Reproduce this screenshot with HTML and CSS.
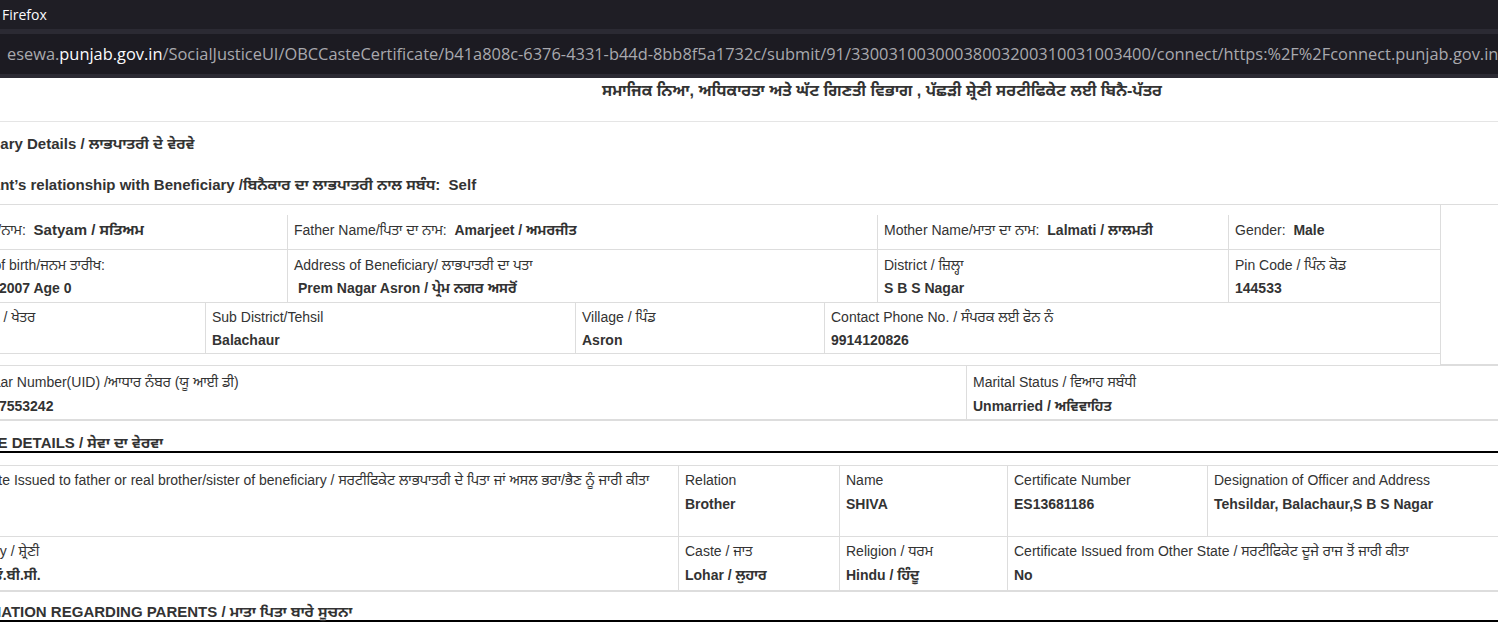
FILE: index.html
```html
<!DOCTYPE html>
<html lang="pa">
<head>
<meta charset="utf-8">
<title>OBC Caste Certificate - eSewa Punjab</title>
<link rel="stylesheet" href="styles.css">
</head>
<body>
<div class="browser">
  <div class="titlebar">Firefox</div>
  <div class="toolbar">
    <div class="urlbar"><span class="url-dim">esewa.</span><span class="url-host">punjab.gov.in</span><span class="url-dim">/SocialJusticeUI/OBCCasteCertificate/b41a808c-6376-4331-b44d-8bb8f5a1732c/submit/91/33003100300038003200310031003400/connect/https:%2F%2Fconnect.punjab.gov.in</span></div>
  </div>
</div>
<div class="viewport">
  <div class="page">
    <h1 class="form-title">ਸਮਾਜਿਕ ਨਿਆ, ਅਧਿਕਾਰਤਾ ਅਤੇ ਘੱਟ ਗਿਣਤੀ ਵਿਭਾਗ , ਪੱਛੜੀ ਸ਼੍ਰੇਣੀ ਸਰਟੀਫਿਕੇਟ ਲਈ ਬਿਨੈ-ਪੱਤਰ</h1>

    <h2 class="section-title">Beneficiary Details / ਲਾਭਪਾਤਰੀ ਦੇ ਵੇਰਵੇ</h2>
    <p class="relation-line">Applicant’s relationship with Beneficiary /ਬਿਨੈਕਾਰ ਦਾ ਲਾਭਪਾਤਰੀ ਨਾਲ ਸਬੰਧ:&nbsp; Self</p>

    <div class="benef">
      <div class="benef-top">
        <div class="benef-main">
          <div class="row row-1 cols-a">
            <div class="cell">Name/ਨਾਮ:&nbsp; <b class="big">Satyam / ਸਤਿਅਮ</b></div>
            <div class="cell">Father Name/ਪਿਤਾ ਦਾ ਨਾਮ:&nbsp; <b>Amarjeet / ਅਮਰਜੀਤ</b></div>
            <div class="cell">Mother Name/ਮਾਤਾ ਦਾ ਨਾਮ:&nbsp; <b>Lalmati / ਲਾਲਮਤੀ</b></div>
            <div class="cell">Gender:&nbsp; <b>Male</b></div>
          </div>
          <div class="row row-2 cols-a">
            <div class="cell"><div class="lbl">Date of birth/ਜਨਮ ਤਾਰੀਖ:</div><div class="val">15/08/2007 Age 0</div></div>
            <div class="cell"><div class="lbl">Address of Beneficiary/ ਲਾਭਪਾਤਰੀ ਦਾ ਪਤਾ</div><div class="val">&nbsp;Prem Nagar Asron / ਪ੍ਰੇਮ ਨਗਰ ਅਸਰੋਂ</div></div>
            <div class="cell"><div class="lbl">District / ਜ਼ਿਲ੍ਹਾ</div><div class="val">S B S Nagar</div></div>
            <div class="cell"><div class="lbl">Pin Code / ਪਿੰਨ ਕੋਡ</div><div class="val">144533</div></div>
          </div>
          <div class="row row-3 cols-b">
            <div class="cell cell-area"><div class="lbl">Area / ਖੇਤਰ</div><div class="val">Rural</div></div>
            <div class="cell"><div class="lbl">Sub District/Tehsil</div><div class="val">Balachaur</div></div>
            <div class="cell"><div class="lbl">Village / ਪਿੰਡ</div><div class="val">Asron</div></div>
            <div class="cell"><div class="lbl">Contact Phone No. / ਸੰਪਰਕ ਲਈ ਫੋਨ ਨੰ</div><div class="val">9914120826</div></div>
          </div>
        </div>
        <div class="photo"></div>
      </div>
      <div class="row row-4 cols-c">
        <div class="cell"><div class="lbl">Aadhaar Number(UID) /ਆਧਾਰ ਨੰਬਰ (ਯੂ ਆਈ ਡੀ)</div><div class="val">xxxxx7553242</div></div>
        <div class="cell"><div class="lbl">Marital Status / ਵਿਆਹ ਸਬੰਧੀ</div><div class="val">Unmarried / ਅਵਿਵਾਹਿਤ</div></div>
      </div>
    </div>

    <h2 class="section-title ruled service-title">SERVICE DETAILS / ਸੇਵਾ ਦਾ ਵੇਰਵਾ</h2>

    <div class="service">
      <div class="row row-5 cols-d">
        <div class="cell cell-issued"><div class="lbl">Certificate Issued to father or real brother/sister of beneficiary / ਸਰਟੀਫਿਕੇਟ ਲਾਭਪਾਤਰੀ ਦੇ ਪਿਤਾ ਜਾਂ ਅਸਲ ਭਰਾ/ਭੈਣ ਨੂੰ ਜਾਰੀ ਕੀਤਾ</div><div class="val">Yes</div></div>
        <div class="cell"><div class="lbl">Relation</div><div class="val">Brother</div></div>
        <div class="cell"><div class="lbl">Name</div><div class="val">SHIVA</div></div>
        <div class="cell"><div class="lbl">Certificate Number</div><div class="val">ES13681186</div></div>
        <div class="cell"><div class="lbl">Designation of Officer and Address</div><div class="val">Tehsildar, Balachaur,S B S Nagar</div></div>
      </div>
      <div class="row row-6 cols-e">
        <div class="cell"><div class="lbl">Category / ਸ਼੍ਰੇਣੀ</div><div class="val">OBC / ਓ.ਬੀ.ਸੀ.</div></div>
        <div class="cell"><div class="lbl">Caste / ਜਾਤ</div><div class="val">Lohar / ਲੁਹਾਰ</div></div>
        <div class="cell"><div class="lbl">Religion / ਧਰਮ</div><div class="val">Hindu / ਹਿੰਦੂ</div></div>
        <div class="cell"><div class="lbl">Certificate Issued from Other State / ਸਰਟੀਫਿਕੇਟ ਦੂਜੇ ਰਾਜ ਤੋਂ ਜਾਰੀ ਕੀਤਾ</div><div class="val">No</div></div>
      </div>
    </div>

    <h2 class="section-title ruled parents-title">INFORMATION REGARDING PARENTS / ਮਾਤਾ ਪਿਤਾ ਬਾਰੇ ਸੂਚਨਾ</h2>
  </div>
</div>
</body>
</html>
```

FILE: styles.css
```css
* { box-sizing: border-box; }

html, body {
  margin: 0;
  padding: 0;
}

body {
  width: 1498px;
  height: 640px;
  overflow: hidden;
  background: #ffffff;
  color: #333333;
  font-family: "Liberation Sans", Arial, "Noto Sans Gurmukhi", "Lohit Gurmukhi", sans-serif;
  font-size: 14px;
  line-height: 20px;
}

/* ---------- browser chrome ---------- */
.titlebar {
  height: 29px;
  background: #1f1e25;
  color: #fbfbfe;
  font-family: "Open Sans", "Noto Sans", sans-serif;
  font-size: 14px;
  line-height: 29px;
  padding-left: 2px;
}

.toolbar {
  height: 49px;
  background: #2b2a33;
  padding: 5px 0 4px;
}

.urlbar {
  height: 40px;
  background: #1c1b22;
  color: #a9a9ae;
  font-family: "Open Sans", "Noto Sans", sans-serif;
  font-size: 16.4px;
  line-height: 40px;
  padding-left: 7px;
  white-space: nowrap;
  overflow: hidden;
}

.url-host { color: #fbfbfe; }

/* ---------- page viewport (scrolled horizontally) ---------- */
.viewport {
  height: 562px;
  overflow: hidden;
}

.page {
  margin-left: -58px;
  width: 1880px;
}

.form-title {
  margin: 0;
  height: 44px;
  padding-top: 3px;
  border-bottom: 1px solid #e5e5e5;
  text-align: center;
  font-size: 16px;
  line-height: 20px;
  font-weight: bold;
}

.section-title {
  margin: 12px 0 0;
  font-size: 15px;
  line-height: 20px;
  font-weight: bold;
}

.relation-line {
  margin: 21px 0 0 4px;
  font-size: 15px;
  line-height: 20px;
  font-weight: bold;
}

/* ---------- beneficiary table ---------- */
.benef {
  margin: 9px 0 0 11px;
  width: 1607px;
  border-top: 1px solid #dddddd;
}

.benef-top {
  display: flex;
  align-items: flex-start;
}

.benef-main {
  width: 1487px;
  padding-top: 10px;
}

.photo {
  width: 120px;
  height: 160px;
  border-left: 1px solid #dddddd;
  border-bottom: 1px solid #dddddd;
}

.row {
  display: grid;
  border-bottom: 1px solid #dddddd;
}

.cols-a { grid-template-columns: 334px 590px 351px 212px; }
.cols-b { grid-template-columns: 252px 370px 249px 616px; }
.cols-c { grid-template-columns: 1013px 594px; }
.cols-d { grid-template-columns: 735px 161px 168px 200px 353px; }
.cols-e { grid-template-columns: 735px 161px 168px 553px; }

.cell {
  padding: 4px 6px 4px 7px;
  white-space: nowrap;
  overflow: hidden;
}

.cell + .cell {
  border-left: 1px solid #dddddd;
  padding-left: 6px;
}

.cell b,
.val {
  font-weight: bold;
}

.cell b.big { font-size: 15px; }

.lbl { margin-bottom: 3px; }

.row-1 .cell { padding-top: 5px; padding-bottom: 9px; }
.row-2 .cell { padding-top: 5px; padding-bottom: 4px; }
.row-3 .cell { padding-top: 4px; padding-bottom: 3px; }
.cell-area .lbl { padding-left: 10px; }

.row-4 {
  border-top: 1px solid #dddddd;
  border-bottom: 2px solid #dddddd;
}
.row-4 .cell { padding-top: 6px; padding-bottom: 3px; }
.row-4 .lbl { margin-bottom: 4px; }

/* ---------- service ---------- */
.ruled {
  padding-top: 1px;
  line-height: 17px;
  border-bottom: 2px solid #000000;
}

.service-title { margin-top: 12px; }

.service {
  margin: 12px 0 0 1px;
  width: 1617px;
  border-top: 1px solid #dddddd;
}

.row-5 { min-height: 71px; }
.row-5 .cell,
.row-6 .cell { padding-top: 4px; }
.row-5 .lbl,
.row-6 .lbl { margin-bottom: 4px; }
.row-5 .cell-issued { padding-left: 4px; }

.row-6 {
  border-bottom: 2px solid #dddddd;
}
.row-6 .cell { padding-bottom: 5px; }

.parents-title { margin-top: 10px; }
```
